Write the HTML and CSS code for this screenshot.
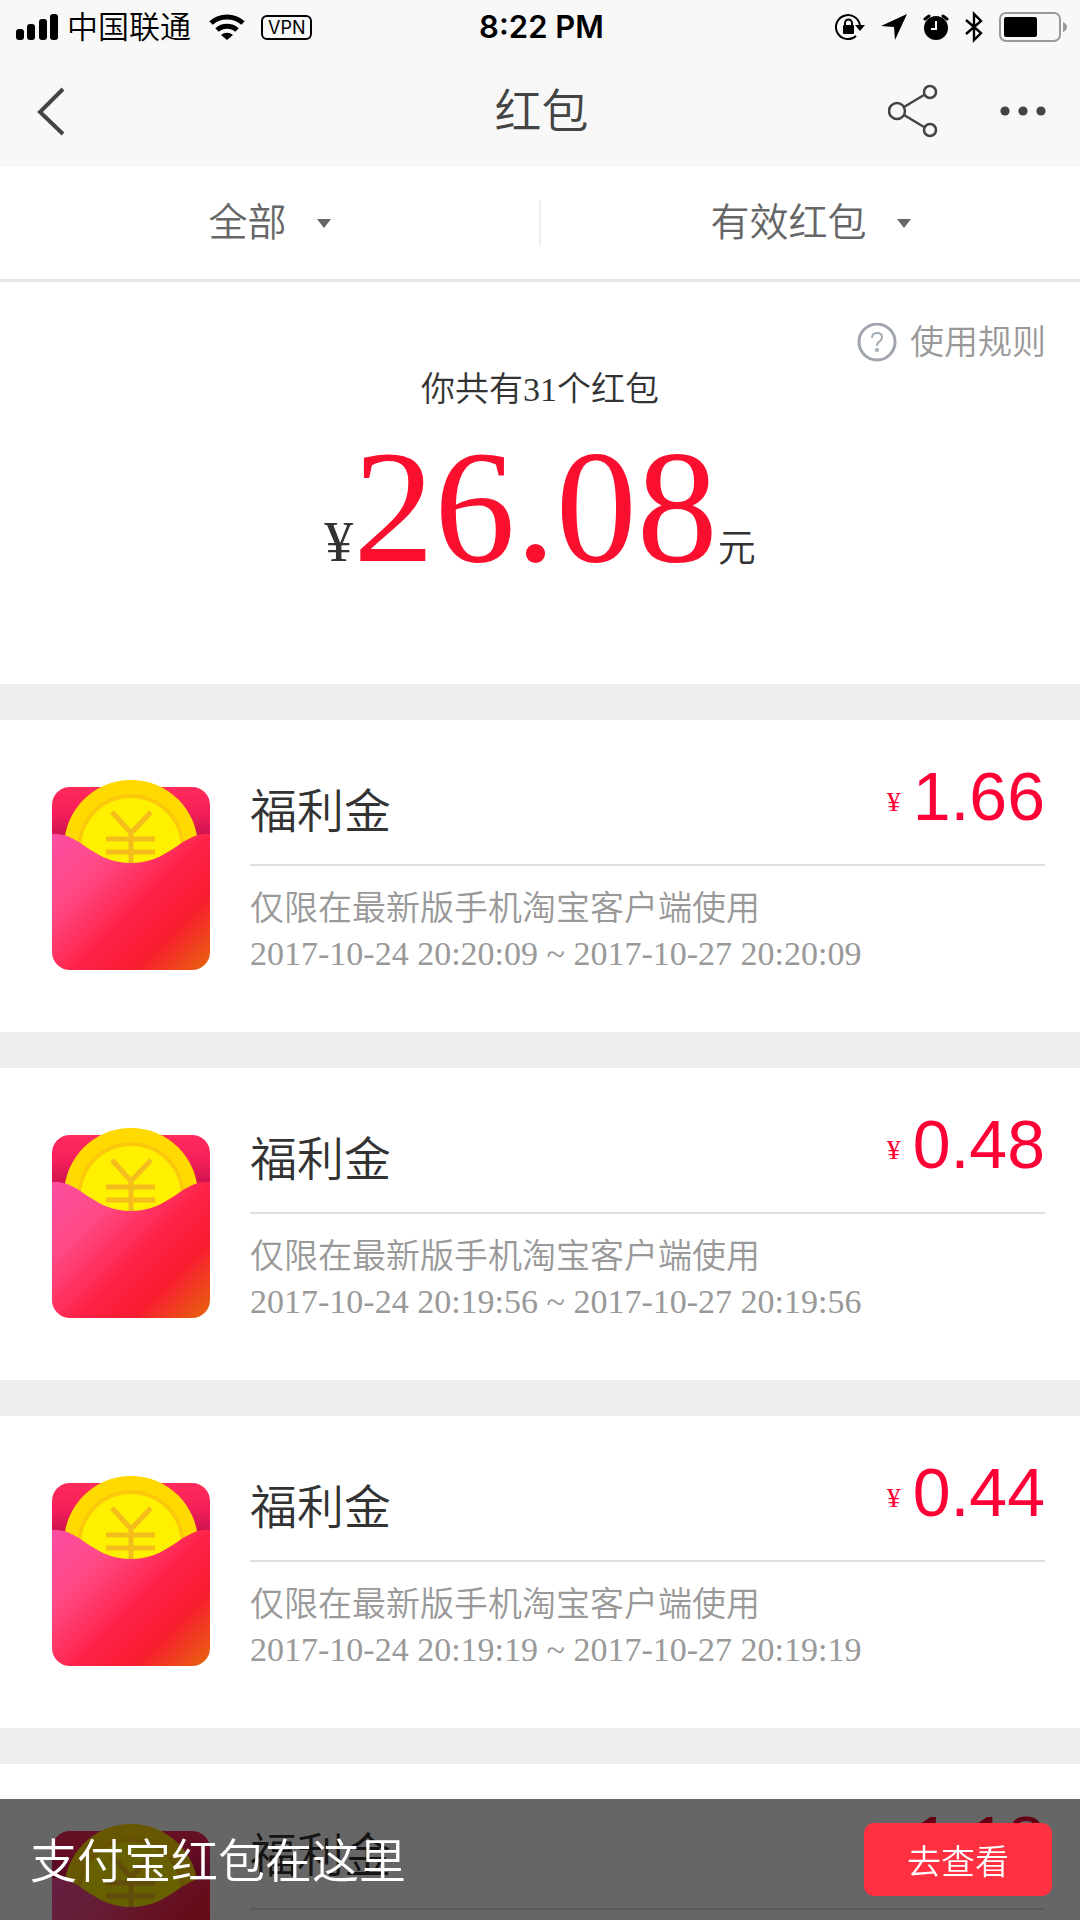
FILE: index.html
```html
<!DOCTYPE html>
<html lang="zh-CN">
<head>
<meta charset="utf-8">
<meta name="viewport" content="width=device-width, initial-scale=1">
<title>红包</title>
<link rel="stylesheet" href="styles.css">
</head>
<body>
<svg class="defs" aria-hidden="true">
  <defs>
    <linearGradient id="flap" x1="0" y1="0" x2="0" y2="1">
      <stop offset="0" stop-color="#ff2a5c"/><stop offset="0.3" stop-color="#f8205a"/><stop offset="0.7" stop-color="#c4104c"/>
    </linearGradient>
    <linearGradient id="pocket" gradientUnits="userSpaceOnUse" x1="10" y1="50" x2="150" y2="190">
      <stop offset="0" stop-color="#fb4da0"/><stop offset="0.25" stop-color="#ff4a86"/><stop offset="0.55" stop-color="#ff2248"/><stop offset="0.75" stop-color="#f81c30"/><stop offset="1" stop-color="#e85f10"/>
    </linearGradient>
    <symbol id="envelope" viewBox="0 0 158 190">
      <path d="M18 7h122a18 18 0 0 1 18 18v60H0V25A18 18 0 0 1 18 7z" fill="url(#flap)"/>
      <circle cx="79" cy="67" r="67" fill="#ffd900"/>
      <circle cx="79" cy="67" r="53" fill="#fcc80c"/>
      <circle cx="79" cy="68" r="50" fill="#fff000"/>
      <path d="M60 32l19 21 20-21M79 53v32M54 59h49M54 72h49" fill="none" stroke="#f5bd1c" stroke-width="5"/>
      <path d="M0 54h6c24 2 36 29 73 29s49-27 73-29h6v118a18 18 0 0 1-18 18H18a18 18 0 0 1-18-18z" fill="url(#pocket)"/>
    </symbol>
  </defs>
</svg>
<div class="app">
  <header class="top">
    <div class="status">
      <div class="status-side">
        <svg width="42" height="26" viewBox="0 0 42 26"><rect y="15" width="8" height="11" rx="3"/><rect x="11" y="10" width="8" height="16" rx="3"/><rect x="23" y="5" width="8" height="21" rx="3"/><rect x="34" width="8" height="26" rx="3"/></svg>
        <span class="carrier">中国联通</span>
        <svg class="wifi" width="36" height="26" viewBox="0 0 36 26"><path d="M2 9a24 24 0 0 1 32 0M8 16a15 15 0 0 1 20 0" fill="none" stroke="#000" stroke-width="5"/><path d="M12 21a9 9 0 0 1 12 0l-6 5z"/></svg>
        <span class="vpn">VPN</span>
      </div>
      <time class="clock">8:22 PM</time>
      <div class="status-side status-right">
        <svg width="30" height="28" viewBox="0 0 30 28"><path d="M21 23A12 12 0 1 1 25 14" fill="none" stroke="#000" stroke-width="2"/><path d="M20 12h10l-5 6z"/><rect x="8" y="12" width="11" height="9" rx="1"/><path d="M10 13v-3a3 3 0 0 1 7 0v3" fill="none" stroke="#000" stroke-width="2"/></svg>
        <svg width="26" height="26" viewBox="0 0 26 26"><path d="M26 0L14 26 13 13 0 12z"/></svg>
        <svg width="26" height="26" viewBox="0 0 26 26"><circle cx="13" cy="14" r="12"/><path d="M2 5l4-3M20 2l4 3" stroke="#000" stroke-width="3" stroke-linecap="round"/><path d="M13 7v8H8" fill="none" stroke="#f8f8f8" stroke-width="2"/></svg>
        <svg width="18" height="32" viewBox="0 0 18 32"><path d="M1 9l15 13-7 7V3l7 7L1 23" fill="none" stroke="#000" stroke-width="2.4"/></svg>
        <svg width="68" height="30" viewBox="0 0 68 30"><rect x="1" y="1" width="60" height="28" rx="6" fill="none" stroke="#999" stroke-width="2"/><rect x="5" y="5" width="33" height="20" rx="2"/><path d="M64 10q4 2 4 5t-4 5z" fill="#999"/></svg>
      </div>
    </div>
    <nav class="navbar">
      <button class="icon-btn" aria-label="返回"><svg width="28" height="50" viewBox="0 0 28 50"><path d="M26 3L3 26l23 22" fill="none" stroke="#444" stroke-width="4"/></svg></button>
      <h1 class="title">红包</h1>
      <div class="actions">
        <button class="icon-btn" aria-label="分享"><svg width="50" height="54" viewBox="0 0 50 54"><g fill="none" stroke="#444" stroke-width="2.5"><circle cx="9" cy="27" r="8"/><circle cx="42" cy="8" r="6"/><circle cx="42" cy="46" r="6"/><path d="M16 23l20-12M16 31l20 12"/></g></svg></button>
        <button class="icon-btn" aria-label="更多"><svg width="46" height="10" viewBox="0 0 46 10"><g fill="#444"><circle cx="5" cy="5" r="4.6"/><circle cx="23" cy="5" r="4.6"/><circle cx="41" cy="5" r="4.6"/></g></svg></button>
      </div>
    </nav>
  </header>
  <div class="filters">
    <button class="filter">全部<span class="caret"></span></button>
    <button class="filter">有效红包<span class="caret"></span></button>
  </div>
  <main class="content">
    <section class="summary">
      <a class="rules" href="#rules"><svg width="40" height="40" viewBox="0 0 40 40"><circle cx="20" cy="19" r="18" fill="none" stroke="#a0a5ad" stroke-width="3"/><path d="M15 15q0-5 5-5t5 4q0 3-3 5-2 1-2 4" fill="none" stroke="#a3adb5" stroke-width="2"/><circle cx="20" cy="27" r="2" fill="#a3adb5"/></svg>使用规则</a>
      <p class="count">你共有31个红包</p>
      <p class="total"><span class="yen">¥</span><strong class="sum">26.08</strong><span class="unit">元</span></p>
    </section>
    <ul class="list">
      <li class="card">
        <svg class="cover"><use href="#envelope"/></svg>
        <div class="info">
          <div class="head"><h2 class="name">福利金</h2><p class="price"><span class="currency">¥</span>1.66</p></div>
          <p class="note">仅限在最新版手机淘宝客户端使用</p>
          <p class="note">2017-10-24 20:20:09 ~ 2017-10-27 20:20:09</p>
        </div>
      </li>
      <li class="card">
        <svg class="cover"><use href="#envelope"/></svg>
        <div class="info">
          <div class="head"><h2 class="name">福利金</h2><p class="price"><span class="currency">¥</span>0.48</p></div>
          <p class="note">仅限在最新版手机淘宝客户端使用</p>
          <p class="note">2017-10-24 20:19:56 ~ 2017-10-27 20:19:56</p>
        </div>
      </li>
      <li class="card">
        <svg class="cover"><use href="#envelope"/></svg>
        <div class="info">
          <div class="head"><h2 class="name">福利金</h2><p class="price"><span class="currency">¥</span>0.44</p></div>
          <p class="note">仅限在最新版手机淘宝客户端使用</p>
          <p class="note">2017-10-24 20:19:19 ~ 2017-10-27 20:19:19</p>
        </div>
      </li>
      <li class="card">
        <svg class="cover"><use href="#envelope"/></svg>
        <div class="info">
          <div class="head"><h2 class="name">福利金</h2><p class="price"><span class="currency">¥</span>1.18</p></div>
        </div>
      </li>
    </ul>
  </main>
  <aside class="banner">
    <p class="banner-text">支付宝红包在这里</p>
    <button class="go">去查看</button>
  </aside>
</div>
</body>
</html>
```
FILE: styles.css
```css
* { box-sizing: border-box; margin: 0; padding: 0; }

body {
  background: #fff;
  color: #333;
  font-family: "Liberation Serif", "Noto Sans CJK SC", serif;
  font-weight: 350;
}

button {
  border: 0;
  background: none;
  color: inherit;
  font: inherit;
}

svg { display: block; flex: none; }
.defs { position: absolute; width: 0; height: 0; }

.app {
  display: flex;
  flex-direction: column;
  height: 100vh;
}

.top { background: #f8f8f8; flex: none; }

.status {
  display: grid;
  grid-template-columns: 1fr auto 1fr;
  align-items: center;
  height: 54px;
  padding: 0 13px 0 16px;
  color: #000;
}
.status-side { display: flex; align-items: center; }
.carrier { margin-left: 9px; padding-top: 2px; font-size: 31px; line-height: 40px; }
.wifi { margin-left: 18px; }
.vpn {
  margin-left: 16px;
  padding: 0 5px;
  border: 2px solid #000;
  border-radius: 6px;
  font: 400 18px/21px Inter, sans-serif;
}
.clock { font: 600 31px/40px Inter, sans-serif; }
.status-right { justify-content: flex-end; gap: 16px; }

.navbar {
  display: grid;
  grid-template-columns: 1fr auto 1fr;
  align-items: center;
  height: 113px;
  padding: 0 34px 0 37px;
  color: #444;
}
.icon-btn { justify-self: start; }
.title { padding-top: 2px; font-size: 47px; font-weight: 350; line-height: 64px; }
.actions { display: flex; align-items: center; justify-content: flex-end; gap: 62px; }

.filters {
  display: flex;
  flex: none;
  align-items: center;
  height: 115px;
  border-bottom: 3px solid #e6e6e6;
  color: #666;
}
.filter {
  display: flex;
  flex: 1;
  align-items: center;
  justify-content: center;
  gap: 30px;
  height: 44px;
  font-size: 39px;
  line-height: 44px;
}
.filter + .filter { border-left: 2px solid #eee; }
.caret {
  border: 7px solid transparent;
  border-top: 9px solid #666;
  border-bottom: 0;
}

.content {
  flex: 1;
  min-height: 0;
  overflow-y: auto;
  scrollbar-width: none;
}

.summary {
  display: flex;
  flex-direction: column;
  align-items: center;
  padding: 36px 34px 41px;
}
.rules {
  display: flex;
  align-items: center;
  align-self: flex-end;
  gap: 13px;
  color: #999;
  font-size: 34px;
  line-height: 50px;
  text-decoration: none;
}
.count { font-size: 34px; line-height: 44px; }
.total { display: flex; align-items: baseline; line-height: 190px; }
.yen { font-size: 58px; }
.sum { color: #fa0f2e; font-size: 162px; font-weight: 400; }
.unit { font-size: 38px; }

.list { list-style: none; }
.card {
  display: flex;
  align-items: flex-start;
  gap: 40px;
  height: 348px;
  padding: 40px 35px 0 52px;
  border-top: 36px solid #ededed;
}
.cover { width: 158px; height: 190px; margin-top: 20px; }
.info { flex: 1; }
.head {
  display: flex;
  align-items: center;
  justify-content: space-between;
  height: 106px;
  margin-bottom: 20px;
  border-bottom: 2px solid #e0e0e0;
}
.name { font-size: 47px; font-weight: 350; line-height: 64px; }
.price {
  display: flex;
  align-items: center;
  align-self: flex-start;
  gap: 12px;
  color: #ff0036;
  font: 400 68px/72px "Liberation Sans", sans-serif;
}
.currency { padding-top: 12px; font: 400 28px/40px "Liberation Serif", serif; }
.note { color: #999; font-size: 34px; line-height: 45px; }

.banner {
  position: fixed;
  right: 0;
  bottom: 0;
  left: 0;
  display: flex;
  align-items: center;
  justify-content: space-between;
  height: 121px;
  padding: 0 28px 0 30px;
  background: rgba(0, 0, 0, 0.6);
  color: #fff;
}
.banner-text { padding-top: 4px; font-size: 47px; line-height: 64px; }
.go {
  width: 188px;
  height: 73px;
  border-radius: 10px;
  background: #ff3040;
  font-size: 34px;
}
```
